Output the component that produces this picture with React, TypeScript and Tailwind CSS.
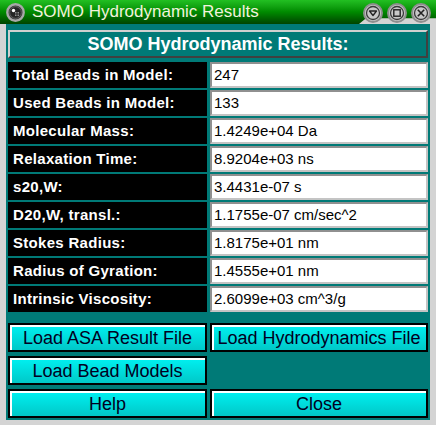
import React from "react";

// results shown in the SOMO window
const rows: [string, string][] = [
  ["Total Beads in Model:", "247"],
  ["Used Beads in Model:", "133"],
  ["Molecular Mass:", "1.4249e+04 Da"],
  ["Relaxation Time:", "8.9204e+03 ns"],
  ["s20,W:", "3.4431e-07 s"],
  ["D20,W, transl.:", "1.1755e-07 cm/sec^2"],
  ["Stokes Radius:", "1.8175e+01 nm"],
  ["Radius of Gyration:", "1.4555e+01 nm"],
  ["Intrinsic Viscosity:", "2.6099e+03 cm^3/g"],
];

const AppIcon = () => (
  <svg width="19" height="19" viewBox="0 0 19 19" className="shrink-0">
    <circle cx="9.5" cy="9.5" r="8.2" fill="#3a3a3a" stroke="#a8a8a8" strokeWidth="2.4" />
    <circle cx="9.5" cy="9.5" r="5.8" fill="#262626" stroke="#6a6a6a" strokeWidth="0.8" />
    <circle cx="7.5" cy="7.5" r="1.7" fill="#ffffff" />
    {[0, 1, 2].map((i) =>
      [0, 1, 2].map((j) => (
        <rect key={`${i}-${j}`} x={9 + i * 1.6} y={9 + j * 1.6} width="0.8" height="0.8" fill="#cfcfcf" />
      )),
    )}
  </svg>
);

// round title bar button (minimize / maximize / close)
const TitleButton = ({ kind }: { kind: "min" | "max" | "close" }) => (
  <svg width="20" height="20" viewBox="0 0 20 20" className="shrink-0">
    <circle cx="10" cy="10" r="9" fill="#c8c8c8" stroke="#8e8e8e" strokeWidth="2" />
    <circle cx="10" cy="10" r="6.5" fill="none" stroke="#3a3a3a" strokeWidth="1.3" />
    {kind === "min" && (
      <path d="M6.5 8 L13.5 8 L10 12.5 Z" fill="none" stroke="#222" strokeWidth="1.3" strokeLinejoin="round" />
    )}
    {kind === "max" && <rect x="6.8" y="6.8" width="6.4" height="6.4" fill="none" stroke="#222" strokeWidth="1.4" />}
    {kind === "close" && <path d="M6.8 6.8 L13.2 13.2 M13.2 6.8 L6.8 13.2" stroke="#222" strokeWidth="1.6" />}
  </svg>
);

const Btn = ({ children }: { children: React.ReactNode }) => (
  <button className="h-[29px] border-2 border-black bg-gradient-to-b from-[#00f2f2] to-[#00c8c8] shadow-[inset_2px_2px_0_#ffffff] text-[18px] leading-none text-[#000022] flex items-center justify-center">
    {children}
  </button>
);

export default function App() {
  return (
    <div
      className="w-[436px] h-[425px] bg-[#d4d4d4] flex flex-col overflow-hidden"
      style={{ fontFamily: '"Liberation Sans", Arial, sans-serif' }}
    >
      {/* Title bar */}
      <div className="relative h-[24px] shrink-0">
        <div className="absolute inset-0 bg-gradient-to-b from-[#22c022] via-[#008a00] to-[#004400] [clip-path:polygon(0_0,100%_0,100%_76%,366px_76%,359px_100%,0_100%)]" />
        <div className="relative flex items-center h-full pl-[6px]">
          <AppIcon />
          <span className="ml-[7px] text-[17px] text-[#f2f2dc]">SOMO Hydrodynamic Results</span>
        </div>
        <div className="absolute right-[5px] top-[3px] flex gap-[4px]">
          <TitleButton kind="min" />
          <TitleButton kind="max" />
          <TitleButton kind="close" />
        </div>
      </div>

      {/* Body */}
      <div className="flex-1 mx-[6px] mb-[5px] bg-[#007a77] px-[2px] pt-[6px] pb-[2px] flex flex-col">
        <div className="h-[28px] border-2 border-t-[#d0d0d0] border-l-[#d0d0d0] border-b-[#404040] border-r-[#404040] flex items-center justify-center">
          <span className="text-[18px] font-bold text-white">SOMO Hydrodynamic Results:</span>
        </div>

        <div className="mt-[4px] grid grid-cols-[199px_218px] gap-x-[3px] gap-y-[2px]">
          {rows.map(([label, value]) => (
            <React.Fragment key={label}>
              <div className="h-[26px] bg-black flex items-center pl-[5px] text-[15px] font-bold tracking-[0.3px] text-white">
                {label}
              </div>
              <div className="h-[26px] bg-white border-2 border-t-[#909090] border-l-[#909090] border-b-[#c4c4c4] border-r-[#c4c4c4] flex items-center pl-[2px] text-[15px] text-black">
                {value}
              </div>
            </React.Fragment>
          ))}
        </div>

        <div className="mt-[11px] grid grid-cols-[199px_218px] gap-x-[3px] gap-y-[4px]">
          <Btn>Load ASA Result File</Btn>
          <Btn>Load Hydrodynamics File</Btn>
          <Btn>Load Bead Models</Btn>
          <div />
          <Btn>Help</Btn>
          <Btn>Close</Btn>
        </div>
      </div>
    </div>
  );
}
